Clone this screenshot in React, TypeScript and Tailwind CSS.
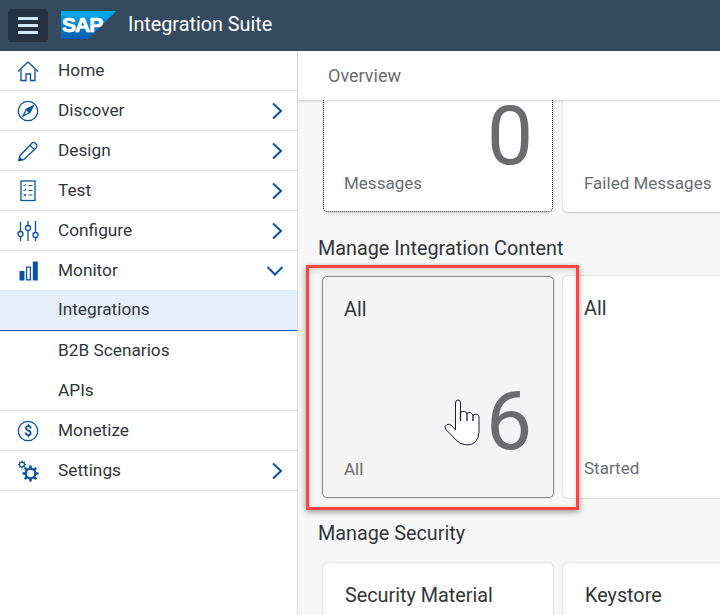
import React from "react";

const Chevron = () => (
  <svg width="14" height="18" viewBox="0 0 14 18" fill="none" stroke="#0854a0" strokeWidth="2">
    <path d="M3 1.5 L11 9 L3 16.5" />
  </svg>
);
const ChevronDown = () => (
  <svg width="18" height="14" viewBox="0 0 18 14" fill="none" stroke="#0854a0" strokeWidth="2">
    <path d="M1.5 3 L9 10.5 L16.5 3" />
  </svg>
);

const stroke = { fill: "none", stroke: "#0854a0", strokeWidth: 1.3 };
const icons: Record<string, React.ReactNode> = {
  home: (
    <g {...stroke}>
      <path d="M1 11.5 L11 2 L21 11.5" />
      <path d="M4 9.5 V20.5 H9 V14 H13.5 V20.5 H18 V9.5" />
    </g>
  ),
  discover: (
    <g {...stroke}>
      <circle cx="11" cy="11" r="9.7" />
      <path d="M16 6 L12.6 12.6 L6 16 L9.4 9.4 Z" />
      <path d="M16 6 L9.4 9.4 L12.6 12.6 Z" fill="#0854a0" />
    </g>
  ),
  design: (
    <g {...stroke}>
      <path d="M3 15.5 L15 3 Q16.5 1.8 18 3 L19.5 4.5 Q20.7 6 19.5 7.5 L7 19.5 L2 20.5 Z" />
      <path d="M13 5.5 L17.5 9.5" />
      <path d="M2 20.5 L2.7 17.5 L5 19.8 Z" fill="#0854a0" />
    </g>
  ),
  test: (
    <g {...stroke}>
      <rect x="4" y="1" width="14" height="19.5" />
      <path d="M6.5 5 L7.5 6 L9 4 M11.5 5.5 H15.5 M6.5 10 L7.5 11 L9 9 M11.5 10.5 H15.5 M6.5 13.8 L9 16.2 M9 13.8 L6.5 16.2 M11.5 15 H15.5" strokeWidth="1" />
    </g>
  ),
  configure: (
    <g {...stroke}>
      <path d="M3.5 2 V11.5 M3.5 17 V21 M11 1 V5.5 M11 10.5 V21 M18.5 1 V12.5 M18.5 17.5 V21" />
      <circle cx="3.5" cy="14" r="2.5" />
      <circle cx="11" cy="8" r="2.5" />
      <circle cx="18.5" cy="15" r="2.5" />
    </g>
  ),
  monitor: (
    <g fill="#0854a0">
      <rect x="2.5" y="11" width="5" height="9.5" />
      <path fillRule="evenodd" d="M9 6.5 H14 V20.5 H9 Z M10.2 7.7 V19.3 H12.8 V7.7 Z" />
      <rect x="15.8" y="1.5" width="5" height="19" />
    </g>
  ),
  monetize: (
    <g>
      <circle cx="11" cy="11" r="9.7" {...stroke} />
      <text x="11" y="16" textAnchor="middle" fontSize="14" fontWeight="700" fill="#0854a0" fontFamily="'Roboto', sans-serif">$</text>
    </g>
  ),
  settings: (
    <g>
      <g fill="none" stroke="#0854a0" strokeWidth="1.2">
        <circle cx="5" cy="4.5" r="2.4" />
        <path d="M5 .5 V2 M5 7 V8.5 M1 4.5 H2.5 M7.5 4.5 H9 M2.2 1.7 L3.2 2.7 M6.8 6.3 L7.8 7.3 M7.8 1.7 L6.8 2.7 M3.2 6.3 L2.2 7.3" />
      </g>
      <g fill="none" stroke="#0854a0">
        <circle cx="13.5" cy="13.5" r="4.8" strokeWidth="2.2" />
        <path d="M13.5 5.5 V8 M13.5 19 V21.5 M5.5 13.5 H8 M19 13.5 H21.5 M7.8 7.8 L9.6 9.6 M17.4 17.4 L19.2 19.2 M19.2 7.8 L17.4 9.6 M9.6 17.4 L7.8 19.2" strokeWidth="2.6" />
      </g>
    </g>
  ),
};

const NavRow = ({ icon, label, arrow }: { icon: string; label: string; arrow?: "right" | "down" }) => (
  <div className="flex h-10 items-center border-b border-[#e0e0e0] pr-[13px]">
    <div className="flex w-[58px] shrink-0 justify-center pr-[2px]">
      <svg width="22" height="22" viewBox="0 0 22 22">{icons[icon]}</svg>
    </div>
    <span className="flex-1 text-[17.25px] text-[#32363a]">{label}</span>
    {arrow === "right" && <Chevron />}
    {arrow === "down" && <ChevronDown />}
  </div>
);

const Tile = ({ title, sub, value, className = "" }: { title: string; sub: string; value?: string; className?: string }) => (
  <div className={`relative flex h-[222px] flex-col justify-between rounded-[5px] px-[21px] pt-[20px] shadow-[0_0_2px_rgba(0,0,0,0.25)] ${className}`}>
    <div className="text-[19.8px] leading-[26px] text-[#32363a]">{title}</div>
    <div className="flex flex-col">
      {value && <div className="-mb-[4px] self-end text-[82px] leading-[80px] text-[#6a6d70]">{value}</div>}
      <div className="text-[17px] leading-[24px] text-[#6a6d70]">{sub}</div>
    </div>
  </div>
);

const Hand = () => (
  <svg className="absolute left-[430px] top-[390px]" width="70" height="70" viewBox="0 0 70 70">
    <path
      d="M25.5 40 V13 Q25.5 10 28 10 Q30.5 10 30.5 13 V22 Q34.5 20 37 23 Q40.5 21 43 25 Q48 22.5 49 27 V42 Q48 55 37 55 Q30 55 25 49 L15.5 39 Q14 36 17 34.5 Q20 33.5 22 36 Z"
      fill="#fff"
      stroke="#1b2030"
      strokeWidth="1"
    />
    <path d="M30.5 22 V31 M37 23 V31 M43 25 V31" fill="none" stroke="#1b2030" strokeWidth="1.3" />
  </svg>
);

export default function App() {
  return (
    <div
      className="relative h-[615px] w-[720px] overflow-hidden bg-white"
      style={{ fontFamily: "Roboto, 'Noto Sans', sans-serif" }}
    >
      <header className="flex h-[51px] items-center bg-[#354a5f] pl-[8px]">
        <div className="flex h-[33px] w-[40px] items-center justify-center rounded-[4px] bg-[#233140]">
          <div className="flex w-[20px] flex-col gap-[4px]">
            <span className="h-[3px] bg-[#d1e8ff]" />
            <span className="h-[3px] bg-[#d1e8ff]" />
            <span className="h-[3px] bg-[#d1e8ff]" />
          </div>
        </div>
        <svg className="ml-[13px] -mt-[2px]" width="55" height="28" viewBox="0 0 55 28">
          <defs>
            <linearGradient id="sap" x1="0" y1="0" x2="0" y2="1">
              <stop offset="0" stopColor="#00aeef" />
              <stop offset="1" stopColor="#0a5bb0" />
            </linearGradient>
          </defs>
          <path d="M0 0 H55 L27.5 28 H0 Z" fill="url(#sap)" />
          <text x="1" y="20.5" fontSize="21" fontWeight="700" fill="#fff" stroke="#fff" strokeWidth="0.7" fontFamily="'Liberation Sans', sans-serif" letterSpacing="-1">SAP</text>
        </svg>
        <span className="ml-[12px] -mt-[1px] text-[19.8px] text-white">Integration Suite</span>
      </header>

      <div className="flex h-[564px]">
        <aside className="w-[298px] shrink-0 border-r border-[#e0e0e0] bg-white">
          <NavRow icon="home" label="Home" />
          <NavRow icon="discover" label="Discover" arrow="right" />
          <NavRow icon="design" label="Design" arrow="right" />
          <NavRow icon="test" label="Test" arrow="right" />
          <NavRow icon="configure" label="Configure" arrow="right" />
          <NavRow icon="monitor" label="Monitor" arrow="down" />
          <div className="-mt-px flex h-[41px] items-center border-b border-[#0854a0] bg-[#e5f0fa] pl-[58px] text-[17.25px] text-[#32363a]">Integrations</div>
          <div className="flex h-10 items-center pl-[58px] text-[17.25px] text-[#32363a]">B2B Scenarios</div>
          <div className="flex h-10 items-center border-b border-[#e0e0e0] pl-[58px] text-[17.25px] text-[#32363a]">APIs</div>
          <NavRow icon="monetize" label="Monetize" />
          <NavRow icon="settings" label="Settings" arrow="right" />
        </aside>

        <main className="flex min-w-0 flex-1 flex-col bg-[#f7f7f7]">
          <div className="z-10 flex h-[49px] shrink-0 items-center bg-white pl-[30px] text-[18px] text-[#6a6d70] shadow-[0_1px_2px_rgba(0,0,0,0.2)]">
            Overview
          </div>
          <div className="flex flex-col overflow-hidden pl-[25px]">
            <div className="flex gap-[10px]">
              <div className="relative flex h-[112px] w-[230px] shrink-0 flex-col justify-end rounded-b-[5px] border-x border-b border-dotted border-[#222] bg-white px-[20px] pb-[16px] shadow-[0_1px_2px_rgba(0,0,0,0.2)]">
                <div className="absolute right-[19px] top-[6px] text-[82px] leading-[60px] text-[#6a6d70]">0</div>
                <div className="text-[17px] leading-[24px] text-[#6a6d70]">Messages</div>
              </div>
              <div className="flex h-[112px] w-[230px] shrink-0 flex-col justify-end rounded-b-[5px] bg-white px-[21px] pb-[17px] shadow-[0_1px_2px_rgba(0,0,0,0.2)]">
                <div className="whitespace-nowrap text-[17px] leading-[24px] text-[#6a6d70]">Failed Messages</div>
              </div>
            </div>
            <div className="-ml-[5px] mt-[24px] h-[26px] text-[19.8px] leading-[26px] text-[#32363a]">Manage Integration Content</div>
            <div className="mt-[14px] flex gap-[10px]">
              <Tile title="All" sub="All" value="6" className="-ml-px w-[232px] shrink-0 border border-[#8c8c8c] bg-[#f4f4f4] pb-[16px]" />
              <Tile title="All" sub="Started" className="-ml-px w-[230px] shrink-0 bg-white pb-[18px]" />
            </div>
            <div className="-ml-[5px] mt-[23px] h-[26px] text-[19.8px] leading-[26px] text-[#32363a]">Manage Security</div>
            <div className="mt-[16px] flex gap-[10px]">
              <div className="h-[100px] w-[230px] shrink-0 rounded-[5px] bg-white px-[22px] pt-[20px] text-[19.8px] leading-[26px] text-[#32363a] shadow-[0_0_2px_rgba(0,0,0,0.25)]">Security Material</div>
              <div className="h-[100px] w-[230px] shrink-0 rounded-[5px] bg-white px-[22px] pt-[20px] text-[19.8px] leading-[26px] text-[#32363a] shadow-[0_0_2px_rgba(0,0,0,0.25)]">Keystore</div>
            </div>
          </div>
        </main>
      </div>

      <div className="absolute left-[306px] top-[265px] h-[245px] w-[273px] border-[3px] border-[#ff4343] shadow-[0_2px_6px_rgba(0,0,0,0.4),inset_0_2px_6px_rgba(0,0,0,0.15)]" />
      <Hand />
    </div>
  );
}
